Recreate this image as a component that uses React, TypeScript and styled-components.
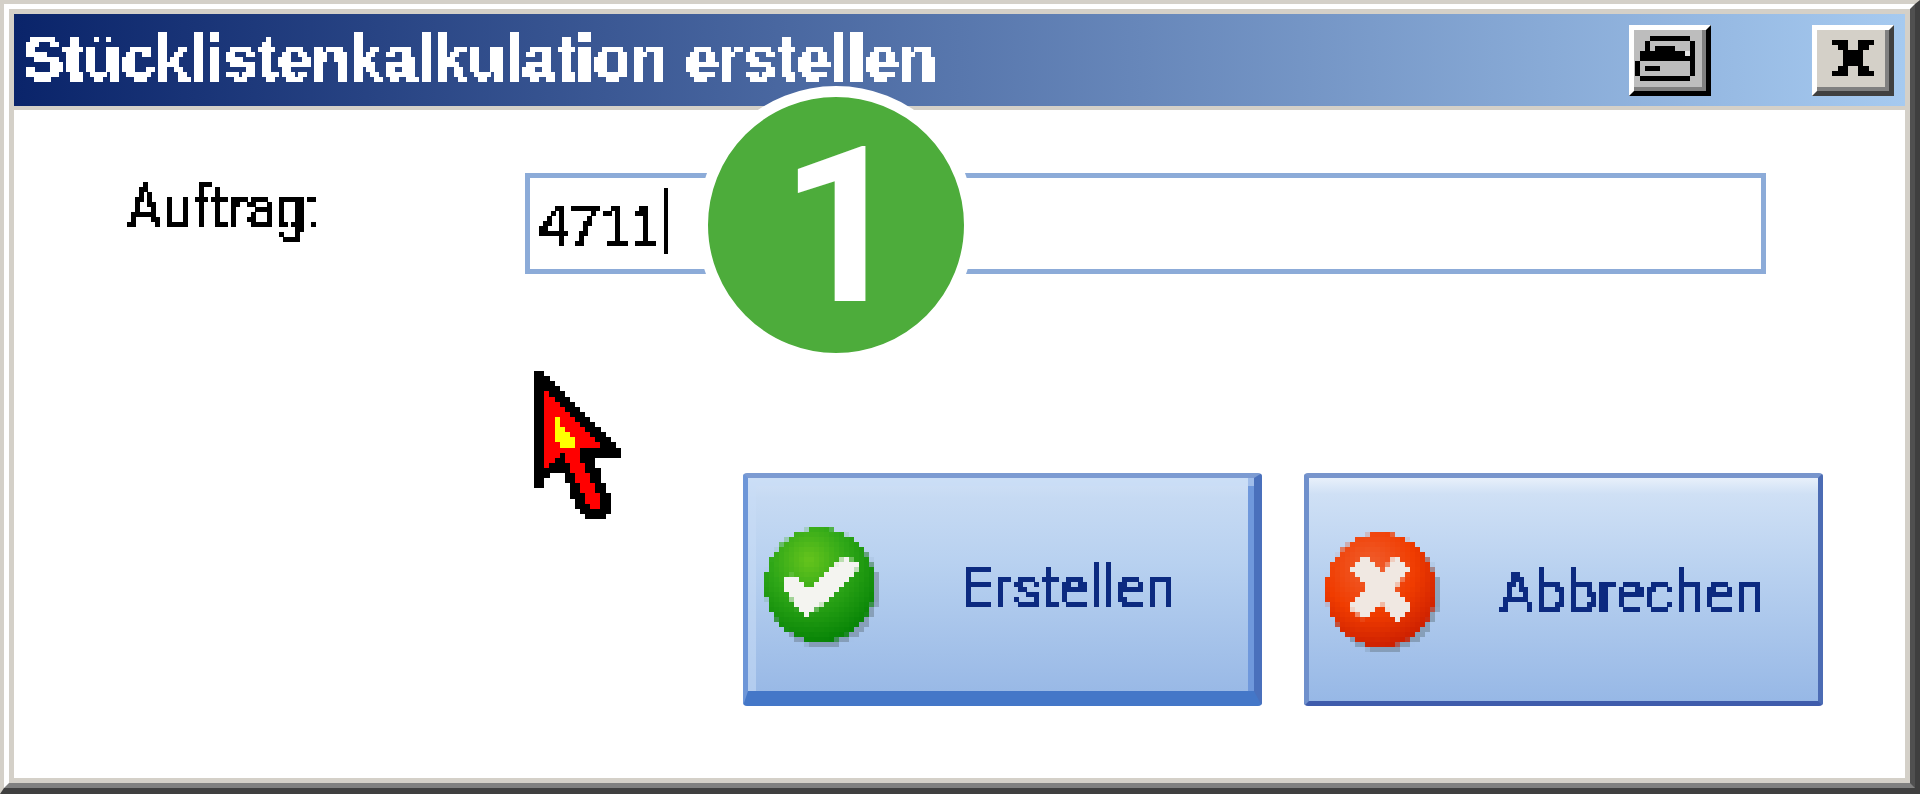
import styled, { createGlobalStyle } from 'styled-components';

const GlobalStyle = createGlobalStyle`
  html, body {
    margin: 0;
    padding: 0;
    background: #ffffff;
  }
`;

const CURSOR = [
  'KK',
  'KKK',
  'KKKK',
  'KKKKK',
  'KKRKKK',
  'KKRRKKK',
  'KKRRRKKK',
  'KKRRRRKKK',
  'KKRRRRRKKK',
  'KKRRYRRRKKK',
  'KKRRYRRRRKKK',
  'KKRRYYRRRRKKK',
  'KKRRYYYRRRRKKK',
  'KKRRYYYYRRRRKKK',
  'KKRRRYYYRRRRRKKK',
  'KKRRRRRRRKKKKKKKK',
  'KKRRRKRRRKKKKKKKK',
  'KKRRKKRRRKKK',
  'KKRKKKKRRRKK',
  'KKKKKKKRRRKKK',
  'KKK...KKRRRKK',
  'KK....KKRRRKK',
  'KK.....KKRRRKK',
  '.......KKRRRKK',
  '.......KKKRRRKK',
  '........KKRRRKK',
  '........KKKRRKK',
  '.........KKKKKK',
  '..........KKKK',
];

const PRINTER = [
  '...KKKKKKKK.',
  '..K........K',
  '..K.KKKK...K',
  '.KKKKKKKKKLK',
  '.KKKKKKKKKKK',
  'K..........K',
  'K.KKK......K',
  'K..........K',
  '.KKKKKKKKKK.',
];

const CLOSE = [
  'KKK..KKK',
  '.KK..KK.',
  '..KKKK..',
  '..KKKK..',
  '..KKKK..',
  '.KK..KK.',
  'KKK..KKK',
];

const PALETTE: Record<string, string> = {
  K: '#000000',
  R: '#ff0000',
  Y: '#ffff00',
  L: '#e4e4e4',
};

const PixelArt = ({ rows, width, height }: { rows: string[]; width: number; height: number }) => {
  const cols = Math.max(...rows.map((r) => r.length));
  return (
    <svg width={width} height={height} viewBox={`0 0 ${cols} ${rows.length}`} shapeRendering="crispEdges">
      {rows.map((row, y) =>
        row.split('').map((c, x) =>
          c === '.' ? null : <rect key={`${x}-${y}`} x={x} y={y} width={1.02} height={1.02} fill={PALETTE[c]} />
        )
      )}
    </svg>
  );
};

const CheckIcon = () => (
  <IconSvg width="116" height="120" viewBox="0 0 116 120">
    <defs>
      <radialGradient id="checkFill" cx="40%" cy="28%" r="75%">
        <stop offset="0%" stopColor="#66c41c" />
        <stop offset="45%" stopColor="#30a818" />
        <stop offset="100%" stopColor="#058205" />
      </radialGradient>
    </defs>
    <ellipse cx="59" cy="62" rx="56" ry="58" fill="#6c7f90" opacity="0.55" />
    <ellipse cx="56" cy="58" rx="55" ry="57" fill="url(#checkFill)" />
    <polygon points="17,54 29,47 45,62 80,30 94,35 92,47 45,89 35,86" fill="#f4f4f0" />
  </IconSvg>
);

const CrossIcon = () => (
  <IconSvg width="116" height="120" viewBox="0 0 116 120">
    <defs>
      <radialGradient id="crossFill" cx="40%" cy="30%" r="75%">
        <stop offset="0%" stopColor="#f06030" />
        <stop offset="55%" stopColor="#f03c00" />
        <stop offset="100%" stopColor="#c81c00" />
      </radialGradient>
    </defs>
    <ellipse cx="59" cy="62" rx="56" ry="58" fill="#6c7f90" opacity="0.55" />
    <ellipse cx="56" cy="58" rx="55" ry="57" fill="url(#crossFill)" />
    <path d="M33 30 L80 82 M79 30 L32 82" stroke="#f0e8e2" strokeWidth="21" fill="none" />
  </IconSvg>
);

const App = () => {
  return (
    <Screen>
      <GlobalStyle />
      <FilterDefs width="0" height="0" aria-hidden="true">
        <filter id="pixelate" x="0" y="0" width="100%" height="100%" colorInterpolationFilters="sRGB">
          <feFlood x="2" y="2" width="1" height="1" />
          <feComposite width="5" height="5" />
          <feTile result="grid" />
          <feComposite in="SourceGraphic" in2="grid" operator="in" />
          <feComponentTransfer>
            <feFuncA type="discrete" tableValues="0 1" />
          </feComponentTransfer>
          <feMorphology operator="dilate" radius="2" />
        </filter>
        <filter id="pixelate-thin" x="0" y="0" width="100%" height="100%" colorInterpolationFilters="sRGB">
          <feFlood x="2" y="2" width="1" height="1" />
          <feComposite width="5" height="5" />
          <feTile result="grid" />
          <feComposite in="SourceGraphic" in2="grid" operator="in" />
          <feComponentTransfer>
            <feFuncA type="discrete" tableValues="0 1 1 1 1 1" />
          </feComponentTransfer>
          <feMorphology operator="dilate" radius="2" />
        </filter>
        <filter id="mosaic" x="0" y="0" width="100%" height="100%" colorInterpolationFilters="sRGB">
          <feFlood x="2" y="2" width="1" height="1" />
          <feComposite width="5" height="5" />
          <feTile result="grid" />
          <feComposite in="SourceGraphic" in2="grid" operator="in" />
          <feMorphology operator="dilate" radius="2" />
        </filter>
      </FilterDefs>

      <OuterFrame>
        <BevelFrame>
          <Dialog>
            <TitleBar>
              <Title>Stücklistenkalkulation erstellen</Title>
              <TitleButtons>
                <PrinterButton>
                  <PixelArt rows={PRINTER} width={60} height={46} />
                </PrinterButton>
                <CloseButton>
                  <PixelArt rows={CLOSE} width={42} height={36} />
                </CloseButton>
              </TitleButtons>
            </TitleBar>

            <Body>
              <FormRow>
                <FieldLabel>Auftrag:</FieldLabel>
                <InputBox>
                  <InputValue>4711</InputValue>
                  <Caret />
                </InputBox>
              </FormRow>

              <ButtonRow>
                <ActionButton $primary>
                  <CheckIcon />
                  <ButtonLabel>Erstellen</ButtonLabel>
                </ActionButton>
                <ActionButton>
                  <CrossIcon />
                  <ButtonLabel>Abbrechen</ButtonLabel>
                </ActionButton>
              </ButtonRow>
            </Body>
          </Dialog>
        </BevelFrame>
      </OuterFrame>

      <CursorOverlay>
        <PixelArt rows={CURSOR} width={87} height={148} />
      </CursorOverlay>
      <StepBadge>1</StepBadge>
    </Screen>
  );
};

const Screen = styled.div`
  position: relative;
  width: 1920px;
  height: 794px;
  overflow: hidden;
`;

const FilterDefs = styled.svg`
  position: absolute;
`;

const OuterFrame = styled.div`
  box-sizing: border-box;
  height: 100%;
  border-style: solid;
  border-width: 4px 5px 6px 4px;
  border-color: #d4d0c8 #3f3f3f #3f3f3f #d4d0c8;
`;

const BevelFrame = styled.div`
  box-sizing: border-box;
  height: 100%;
  border-style: solid;
  border-width: 5px;
  border-color: #ffffff #505050 #808080 #ffffff;
`;

const Dialog = styled.div`
  box-sizing: border-box;
  height: 100%;
  border: 5px solid #d4d0c8;
  background: #ffffff;
  display: flex;
  flex-direction: column;
`;

const TitleBar = styled.div`
  height: 92px;
  flex-shrink: 0;
  box-sizing: content-box;
  border-bottom: 4px solid #d4d0c8;
  background: linear-gradient(to right, #0a246a, #a6caf0);
  display: flex;
  align-items: center;
  justify-content: space-between;
  padding-right: 11px;
`;

const Title = styled.span`
  display: inline-block;
  padding-left: 9px;
  margin-top: -5px;
  color: #ffffff;
  font-family: 'Liberation Sans', Arial, sans-serif;
  font-weight: 700;
  font-size: 63px;
  line-height: 92px;
  white-space: nowrap;
  transform-origin: left center;
  transform: scaleX(0.97);
  filter: url(#pixelate);
`;

const TitleButtons = styled.div`
  display: flex;
  gap: 101px;
`;

const TitleButton = styled.div`
  box-sizing: border-box;
  width: 82px;
  height: 71px;
  display: flex;
  align-items: center;
  justify-content: center;
  padding-bottom: 5px;
  border-style: solid;
  border-width: 5px;
`;

const PrinterButton = styled(TitleButton)`
  padding-right: 10px;
  background: #bdbdbd;
  border-color: #ffffff #000000 #000000 #ffffff;
  box-shadow: inset -4px -4px 0 #808080;
`;

const CloseButton = styled(TitleButton)`
  background: #d4d0c8;
  border-color: #ffffff #404040 #404040 #ffffff;
  box-shadow: inset -4px -4px 0 #808080;
`;

const Body = styled.div`
  flex: 1;
  display: flex;
  flex-direction: column;
  padding: 63px 82px 0 113px;
`;

const FormRow = styled.div`
  display: flex;
  align-items: flex-start;
`;

const FieldLabel = styled.span`
  display: inline-block;
  width: 398px;
  flex-shrink: 0;
  color: #000000;
  font-family: Roboto, 'Liberation Sans', sans-serif;
  font-weight: 400;
  font-size: 63px;
  line-height: 72px;
  margin-top: -3px;
  transform-origin: left center;
  transform: translateY(2px) scaleX(0.86);
  filter: url(#pixelate);
`;

const InputBox = styled.div`
  box-sizing: border-box;
  width: 1241px;
  height: 101px;
  margin-right: -60px;
  flex-shrink: 0;
  border: 5px solid #8cabd8;
  background: #ffffff;
  display: flex;
  align-items: center;
  padding-left: 9px;
`;

const InputValue = styled.span`
  display: inline-block;
  width: 125px;
  color: #000000;
  font-family: Lato, 'DejaVu Sans', sans-serif;
  font-weight: 400;
  font-size: 56px;
  line-height: 66px;
  transform-origin: left center;
  transform: scaleX(0.93);
  filter: url(#pixelate-thin);
`;

const Caret = styled.span`
  width: 4px;
  height: 66px;
  background: #000000;
  margin-top: -6px;
`;

const ButtonRow = styled.div`
  display: flex;
  justify-content: flex-end;
  gap: 42px;
  margin-top: 199px;
`;

const ActionButton = styled.div<{ $primary?: boolean }>`
  box-sizing: border-box;
  width: 519px;
  height: 233px;
  display: flex;
  align-items: center;
  border-style: solid;
  border-width: ${(p) => (p.$primary ? '5px 8px 15px 5px' : '5px 5px 5px 5px')};
  border-color: ${(p) =>
    p.$primary ? '#7c9bd2 #4a70bc #4477c8 #6d96d8' : '#7895cc #4c6cb4 #3f5cac #6f90cc'};
  border-radius: 4px;
  background: ${(p) =>
    p.$primary
      ? 'linear-gradient(to bottom, #cfe0f6 0, #c6daf3 20px, #b8d1f0 40%, #99b9e6 100%)'
      : 'linear-gradient(to bottom, #e8f0fa 0, #cfe0f5 16px, #bad2f0 40%, #97b8e6 100%)'};
  box-shadow: ${(p) =>
    p.$primary ? 'inset 8px 8px 0 rgba(200, 220, 246, 0.55), inset -6px 0 0 #6f98dc' : 'none'};
  padding-left: 16px;
`;

const IconSvg = styled.svg`
  flex-shrink: 0;
  margin-top: 5px;
  filter: url(#mosaic);
`;

const ButtonLabel = styled.span`
  flex: 1;
  text-align: center;
  margin: 7px 0 0 4px;
  color: #0c2a80;
  font-family: Roboto, 'Liberation Sans', sans-serif;
  font-size: 60px;
  font-weight: 400;
  line-height: 72px;
  transform: scaleX(0.925);
  filter: url(#pixelate);
`;

const CursorOverlay = styled.div`
  position: absolute;
  left: 534px;
  top: 371px;
  line-height: 0;
`;

const StepBadge = styled.div`
  position: absolute;
  left: 697px;
  top: 86px;
  box-sizing: border-box;
  width: 278px;
  height: 278px;
  padding-left: 13px;
  border: 11px solid #ffffff;
  border-radius: 50%;
  background: #4dac3b;
  color: #ffffff;
  font-family: Roboto, 'Liberation Sans', sans-serif;
  font-weight: 700;
  font-size: 218px;
  line-height: 260px;
  text-align: center;
`;

export default App;
